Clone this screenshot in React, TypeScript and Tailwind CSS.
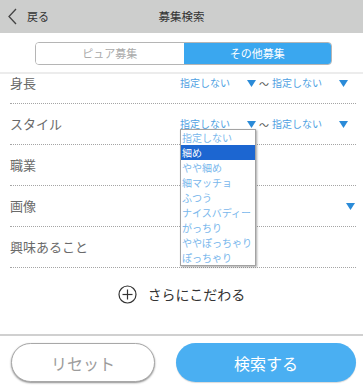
import { useState } from "react";

/* =========================
DATA
========================= */

const STYLE_OPTIONS = [
  "指定しない",
  "細め",
  "やや細め",
  "細マッチョ",
  "ふつう",
  "ナイスバディー",
  "がっちり",
  "ややぽっちゃり",
  "ぽっちゃり",
];

const FONT = { fontFamily: '"Noto Sans CJK JP", "Noto Sans", sans-serif' };

/* =========================
PARTS
========================= */

function Arrow() {
  return (
    <svg width="9" height="7" viewBox="0 0 9 7" className="shrink-0">
      <polygon points="0,0 9,0 4.5,7" fill="#2b8bd8" />
    </svg>
  );
}

function Select({ value }: { value: string }) {
  return (
    <div className="flex w-[76px] items-center justify-between">
      <span className="text-[10px] leading-[12px] text-[#4e9fe2]">{value}</span>
      <Arrow />
    </div>
  );
}

function Row({
  label,
  children,
}: {
  label: string;
  children?: React.ReactNode;
}) {
  return (
    <div className="relative ml-[10px] mr-[7px] flex h-[41px] items-center border-b border-dotted border-[#a5a5a5]">
      <span className="w-[170px] shrink-0 text-[13px] text-[#6a6a6a]">{label}</span>
      {children}
    </div>
  );
}

function Range() {
  return (
    <>
      <Select value="指定しない" />
      <span className="w-[16px] text-center text-[10px] text-[#555]">～</span>
      <Select value="指定しない" />
    </>
  );
}

/* =========================
COMPONENT
========================= */

export default function App() {
  const [tab, setTab] = useState<"pure" | "other">("other");
  const [selected] = useState(1);

  return (
    <div className="flex h-[385px] w-[363px] flex-col overflow-hidden bg-white" style={FONT}>
      {/* HEADER */}
      <div className="relative flex h-[33px] shrink-0 items-center bg-[#cdcecd]">
        <div className="flex items-center pl-[8px]">
          <svg width="9" height="17" viewBox="0 0 9 17">
            <polyline points="8,1 1,8.5 8,16" fill="none" stroke="#444" strokeWidth="1.3" />
          </svg>
          <span className="ml-[10px] text-[11px] text-[#333]">戻る</span>
        </div>
        <span className="absolute left-1/2 -translate-x-1/2 text-[11.5px] text-[#333]">募集検索</span>
      </div>

      {/* TABS */}
      <div className="flex h-[41px] shrink-0 items-start border-b-2 border-[#ececec] pl-[35px] pt-[9px]">
        <div className="flex h-[23px] w-[297px] overflow-hidden rounded-[4px] border border-[#b5b5b5] text-[11px]">
          <button
            onClick={() => setTab("pure")}
            className={`flex-1 ${tab === "pure" ? "bg-[#3aa7ef] text-white" : "bg-white text-[#aaa]"}`}
          >
            ピュア募集
          </button>
          <button
            onClick={() => setTab("other")}
            className={`flex-1 ${tab === "other" ? "bg-[#3aa7ef] text-white" : "bg-white text-[#aaa]"}`}
          >
            その他募集
          </button>
        </div>
      </div>

      {/* CONTENT */}
      <div className="flex-1 overflow-hidden">
        <div className="-mt-[11px]">
          <Row label="身長">
            <Range />
          </Row>

          <Row label="スタイル">
            <Range />

            {/* DROPDOWN */}
            <div className="absolute left-[170px] top-[25px] z-10 w-[76px] border border-[#a3a3a3] bg-white shadow-[1px_1px_2px_rgba(0,0,0,0.35)]">
              {STYLE_OPTIONS.map((o, i) => (
                <div
                  key={o}
                  className={`h-[15px] pl-[1px] text-[10px] leading-[15px] ${
                    i === selected ? "bg-[#1c66d1] text-white" : "text-[#79b7ec]"
                  }`}
                >
                  {o}
                </div>
              ))}
            </div>
          </Row>

          <Row label="職業" />

          <Row label="画像">
            <div className="ml-auto pr-[1px]">
              <Arrow />
            </div>
          </Row>

          <Row label="興味あること" />

          <div className="flex h-[52px] items-center justify-center gap-[11px]">
            <svg width="19" height="19" viewBox="0 0 19 19">
              <circle cx="9.5" cy="9.5" r="8.5" fill="none" stroke="#333" strokeWidth="1.2" />
              <line x1="4.5" y1="9.5" x2="14.5" y2="9.5" stroke="#333" strokeWidth="1.2" />
              <line x1="9.5" y1="4.5" x2="9.5" y2="14.5" stroke="#333" strokeWidth="1.2" />
            </svg>
            <span className="text-[14px] text-[#333]">さらにこだわる</span>
          </div>
        </div>
      </div>

      {/* FOOTER */}
      <div className="flex h-[51px] shrink-0 items-start gap-[21px] border-t-2 border-[#d0d0d0] pl-[11px] pt-[7px]">
        <button className="h-[39px] w-[144px] rounded-full border border-[#a8a8a8] bg-white text-[16px] text-[#9c9c9c] shadow-[0_1px_2px_rgba(0,0,0,0.45)]">
          リセット
        </button>
        <button className="h-[39px] w-[180px] rounded-full bg-[#4aaff2] text-[16px] text-white shadow-[0_1px_1px_rgba(0,0,0,0.15)]">
          検索する
        </button>
      </div>
    </div>
  );
}
